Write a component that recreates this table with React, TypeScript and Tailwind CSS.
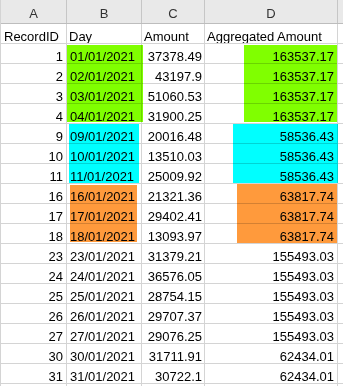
import React from "react";

const rows: [string, string, string, string][] = [
  ["1", "01/01/2021", "37378.49", "163537.17"],
  ["2", "02/01/2021", "43197.9", "163537.17"],
  ["3", "03/01/2021", "51060.53", "163537.17"],
  ["4", "04/01/2021", "31900.25", "163537.17"],
  ["9", "09/01/2021", "20016.48", "58536.43"],
  ["10", "10/01/2021", "13510.03", "58536.43"],
  ["11", "11/01/2021", "25009.92", "58536.43"],
  ["16", "16/01/2021", "21321.36", "63817.74"],
  ["17", "17/01/2021", "29402.41", "63817.74"],
  ["18", "18/01/2021", "13093.97", "63817.74"],
  ["23", "23/01/2021", "31379.21", "155493.03"],
  ["24", "24/01/2021", "36576.05", "155493.03"],
  ["25", "25/01/2021", "28754.15", "155493.03"],
  ["26", "26/01/2021", "29707.37", "155493.03"],
  ["27", "27/01/2021", "29076.25", "155493.03"],
  ["30", "30/01/2021", "31711.91", "62434.01"],
  ["31", "31/01/2021", "30722.1", "62434.01"],
];

const cell = "h-full flex items-end border-r border-[#d4d4d4] leading-[13px] whitespace-nowrap overflow-hidden";

export default function App() {
  return (
    <div
      className="relative w-[343px] h-[386px] overflow-hidden bg-white text-[13px] text-black"
      style={{ fontFamily: '"Liberation Sans", Arial, sans-serif' }}
    >
      <div className="border-l border-[#d4d4d4]">
        {/* column letters */}
        <div className="flex h-[24px] bg-[#e9e9e9] border-b border-[#bdbdbd] text-[#333]">
          <div className="w-[66px] h-full flex items-end justify-center pb-[3px] leading-[13px] border-r border-[#c6c6c6]">A</div>
          <div className="w-[75px] h-full flex items-end justify-center pb-[3px] leading-[13px] border-r border-[#c6c6c6]">B</div>
          <div className="w-[63px] h-full flex items-end justify-center pb-[3px] leading-[13px] border-r border-[#c6c6c6]">C</div>
          <div className="w-[133px] h-full flex items-end justify-center pb-[3px] leading-[13px] border-r border-[#c6c6c6]">D</div>
          <div className="flex-1 h-full" />
        </div>
        {/* header row */}
        <div className="flex h-[20px] border-b border-[#d4d4d4]">
          <div className={`${cell} w-[66px] pl-[3px]`}>RecordID</div>
          <div className={`${cell} w-[75px] pl-[2px]`}>Day</div>
          <div className={`${cell} w-[63px] pl-[2px]`}>Amount</div>
          <div className={`${cell} w-[133px] pl-[2px]`}>Aggregated Amount</div>
          <div className="flex-1 h-full" />
        </div>
        {rows.map((r) => (
          <div key={r[0]} className="flex h-[20px] border-b border-[#d4d4d4]">
            <div className={`${cell} w-[66px] justify-end pr-[3px]`}>{r[0]}</div>
            <div className={`${cell} w-[75px] pl-[3px]`}>{r[1]}</div>
            <div className={`${cell} w-[63px] justify-end pr-[2px]`}>{r[2]}</div>
            <div className={`${cell} w-[133px] justify-end pr-[3px]`}>{r[3]}</div>
            <div className="flex-1 h-full" />
          </div>
        ))}
        <div className="flex h-[20px]">
          <div className={`${cell} w-[66px]`} />
          <div className={`${cell} w-[75px]`} />
          <div className={`${cell} w-[63px]`} />
          <div className={`${cell} w-[133px]`} />
          <div className="flex-1 h-full" />
        </div>
      </div>

      {/* highlights */}
      <div className="absolute left-[67px] top-[45px] w-[76px] h-[77px] bg-[#80ff00] mix-blend-multiply" />
      <div className="absolute left-[244px] top-[45px] w-[93px] h-[77px] bg-[#80ff00] mix-blend-multiply" />
      <div className="absolute left-[69px] top-[124px] w-[70px] h-[59px] bg-[#00ffff] mix-blend-multiply" />
      <div className="absolute left-[233px] top-[124px] w-[105px] h-[59px] bg-[#00ffff] mix-blend-multiply" />
      <div className="absolute left-[70px] top-[185px] w-[67px] h-[57px] bg-[#ff9a3c] mix-blend-multiply" />
      <div className="absolute left-[237px] top-[184px] w-[100px] h-[59px] bg-[#ff9a3c] mix-blend-multiply" />
    </div>
  );
}
